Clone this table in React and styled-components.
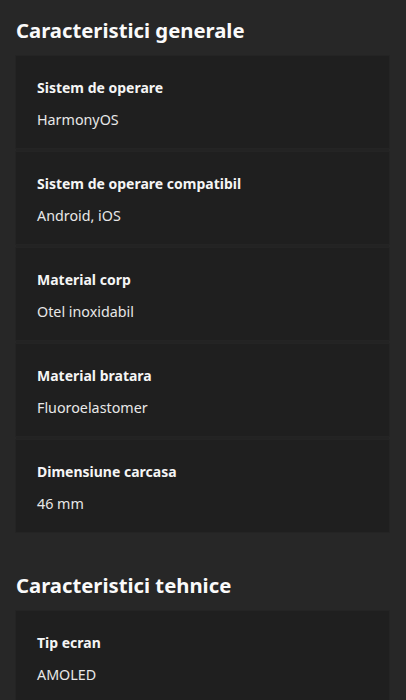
import React from 'react';
import styled, { createGlobalStyle } from 'styled-components';

const GlobalStyle = createGlobalStyle`
  html, body {
    margin: 0;
    padding: 0;
    background: #272727;
  }
  body {
    font-family: "Noto Sans", "Open Sans", sans-serif;
    color: #f2f2f2;
  }
`;

const Page = styled.div`
  padding: 15px 17px 0 16px;
`;

const Section = styled.section`
  margin-bottom: 38px;
`;

const Title = styled.h2`
  margin: 0 0 11px;
  font-size: 20.3px;
  line-height: 30px;
  font-weight: 700;
  color: #fafafa;
`;

const Card = styled.div`
  display: flex;
  flex-direction: column;
  gap: 4px;
  background: #232323;
`;

const Row = styled.div`
  background: #1f1f1f;
  padding: 20px 21px 0;
  height: 92px;
  box-sizing: border-box;
  box-shadow: 0 0 0 1px #242424;
`;

const Label = styled.div`
  font-size: 14px;
  font-weight: 700;
  line-height: 24px;
  color: #f5f5f5;
`;

const Value = styled.div`
  margin-top: 8px;
  font-size: 14.3px;
  font-weight: 400;
  line-height: 24px;
  color: #e8e8e8;
`;

const sections = [
  {
    title: 'Caracteristici generale',
    rows: [
      ['Sistem de operare', 'HarmonyOS'],
      ['Sistem de operare compatibil', 'Android, iOS'],
      ['Material corp', 'Otel inoxidabil'],
      ['Material bratara', 'Fluoroelastomer'],
      ['Dimensiune carcasa', '46 mm'],
    ],
  },
  {
    title: 'Caracteristici tehnice',
    rows: [['Tip ecran', 'AMOLED']],
  },
];

export default function App() {
  return (
    <>
      <GlobalStyle />
      <Page>
        {sections.map((s) => (
          <Section key={s.title}>
            <Title>{s.title}</Title>
            <Card>
              {s.rows.map(([label, value]) => (
                <Row key={label}>
                  <Label>{label}</Label>
                  <Value>{value}</Value>
                </Row>
              ))}
            </Card>
          </Section>
        ))}
      </Page>
    </>
  );
}
